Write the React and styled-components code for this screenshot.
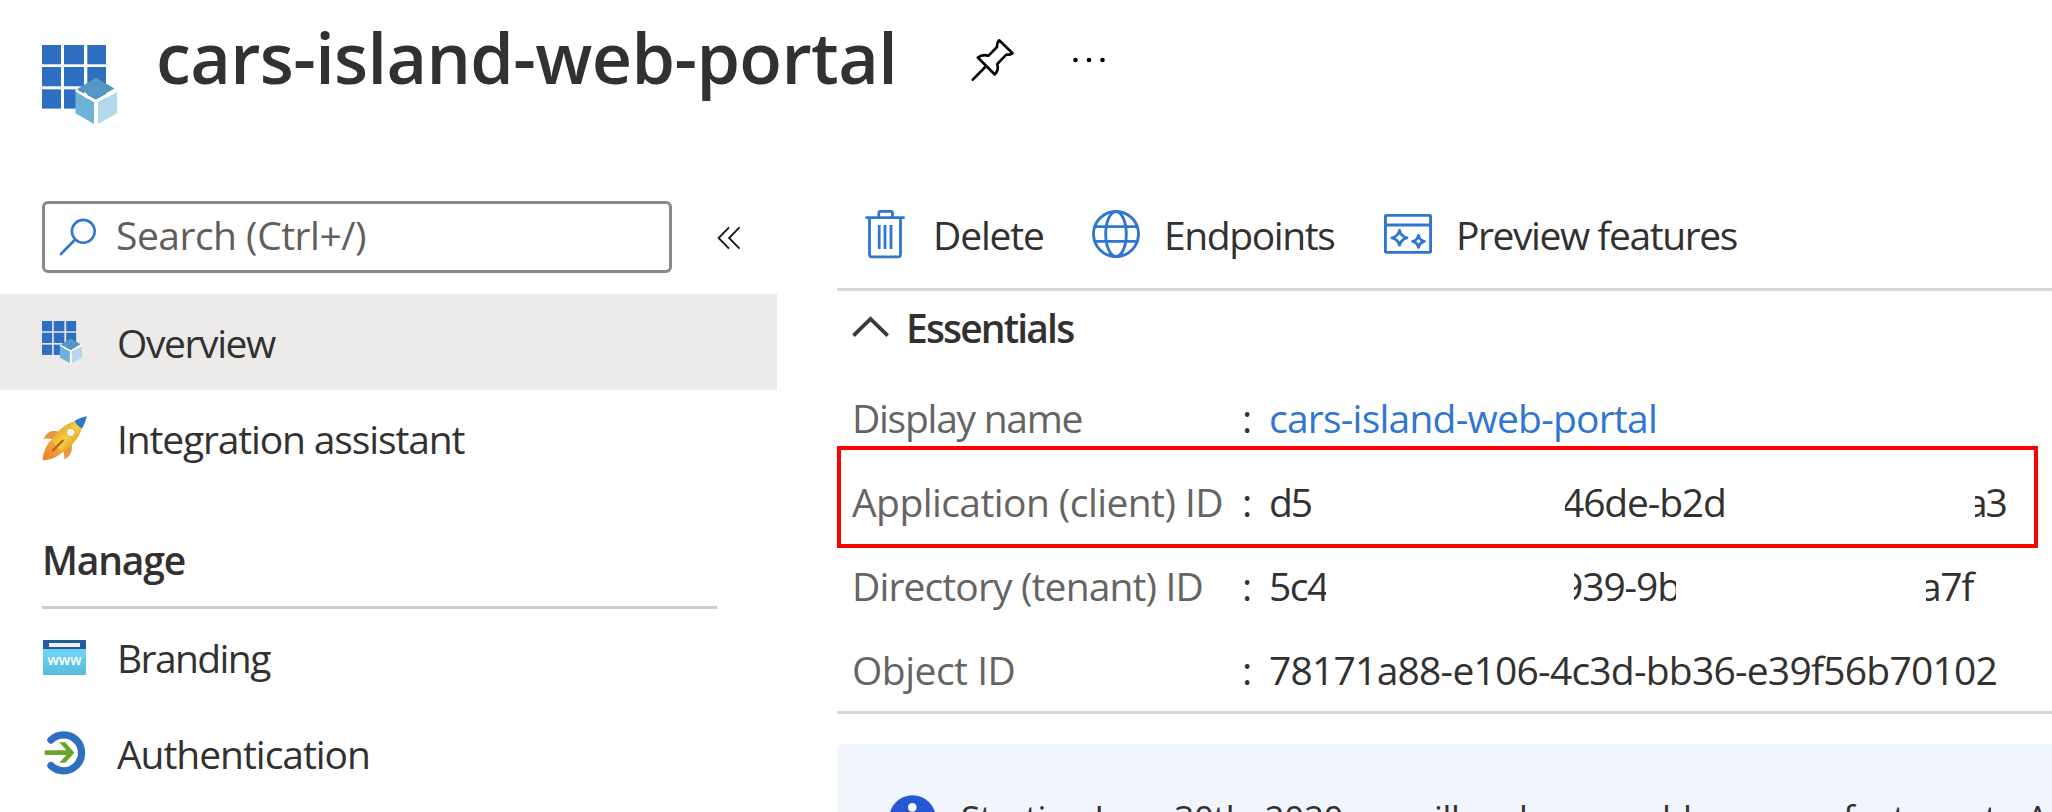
import React from 'react';
import styled, { createGlobalStyle, css } from 'styled-components';

const GlobalStyle = createGlobalStyle`
  *, *::before, *::after { box-sizing: border-box; }
  html, body { margin: 0; padding: 0; background: #fff; overflow: hidden; }
  body {
    font-family: "Open Sans", "Noto Sans", sans-serif;
    font-size: 39px;
    color: #323130;
  }
  svg { flex: none; }
`;

const tracking = css`
  letter-spacing: ${(p) => p.$track || 0}px;
  white-space: nowrap;
`;

const Page = styled.div`
  width: 100%;
  height: 812px;
  overflow: hidden;
  display: flex;
  flex-direction: column;
  background: #fff;
`;

const Header = styled.header`
  height: 180px;
  flex: none;
  display: flex;
  align-items: flex-start;
  padding: 0 42px;
`;

const HeaderIcon = styled.div`
  width: 114px;
  padding-top: 45px;
  line-height: 0;
`;

const Title = styled.h1`
  margin: 0;
  width: 815px;
  font-size: 70px;
  font-weight: 600;
  line-height: 114px;
  ${tracking}
`;

const HeaderActions = styled.div`
  display: flex;
  align-items: center;
  gap: 57px;
  height: 120px;
`;

const Body = styled.div`
  flex: 1;
  display: grid;
  grid-template-columns: 777px 1fr;
  column-gap: 60px;
`;

const Sidebar = styled.nav`
  display: flex;
  flex-direction: column;
`;

const SearchRow = styled.div`
  display: flex;
  align-items: center;
  gap: 45px;
  height: 114px;
  padding: 0 0 0 42px;
`;

const SearchBox = styled.div`
  display: flex;
  align-items: center;
  width: 630px;
  height: 72px;
  border: 3px solid #8a8886;
  border-radius: 6px;
  padding-left: 14px;
`;

const SearchText = styled.span`
  margin-left: 19px;
  padding-bottom: 5px;
  color: #605e5c;
  ${tracking}
`;

const CollapseButton = styled.span`
  display: flex;
  padding-top: 2px;
`;

const NavItem = styled.a`
  display: flex;
  align-items: center;
  height: 96px;
  flex: none;
  padding-left: 42px;
  background: ${(p) => (p.$active ? '#edebe9' : 'transparent')};
`;

const NavIcon = styled.span`
  width: 75px;
  display: flex;
  align-items: center;
  padding-left: ${(p) => p.$inset || 0}px;
`;

const NavLabel = styled.span`
  ${tracking}
`;

const SectionTitle = styled.h2`
  margin: 0 60px 0 42px;
  padding-top: 27px;
  height: 123px;
  flex: none;
  border-bottom: 3px solid #cccccc;
  font-size: 39px;
  font-weight: 600;
  line-height: 94px;
  ${tracking}
`;

const Main = styled.main`
  display: flex;
  flex-direction: column;
  min-width: 0;
`;

const Toolbar = styled.div`
  height: 111px;
  flex: none;
  display: flex;
  align-items: center;
  padding-left: 24px;
  border-bottom: 3px solid #d6d6d6;
`;

const ToolButton = styled.div`
  display: flex;
  align-items: center;
  width: ${(p) => p.$width}px;
  gap: 24px;
`;

const ToolLabel = styled.span`
  ${tracking}
`;

const EssentialsHeader = styled.div`
  height: 85px;
  flex: none;
  display: flex;
  align-items: center;
  padding: 0 0 12px 15px;
  gap: 17px;
`;

const EssentialsTitle = styled.span`
  font-weight: 600;
  ${tracking}
`;

const Essentials = styled.div`
  height: 338px;
  flex: none;
  border-bottom: 3px solid #d6d6d6;
`;

const Field = styled.div`
  position: relative;
  display: grid;
  grid-template-columns: 390px 27px 1fr;
  align-items: center;
  height: 84px;
  padding: 0 0 2px 15px;
`;

const FieldLabel = styled.span`
  color: #666463;
  ${tracking}
`;

const FieldValue = styled.span`
  display: flex;
  color: ${(p) => (p.$link ? '#2f76d2' : '#323130')};
  ${tracking}
`;

const Fragment = styled.span`
  flex: none;
  overflow: hidden;
  width: ${(p) => p.$width}px;
  margin-left: ${(p) => p.$gap || 0}px;
  text-indent: ${(p) => -(p.$cut || 0)}px;
  ${tracking}
`;

const Highlight = styled.div`
  position: absolute;
  left: 0;
  top: -14px;
  width: 1201px;
  height: 102px;
  border: 4px solid #ff0000;
`;

const Notice = styled.div`
  margin-top: 30px;
  height: 180px;
  flex: none;
  display: flex;
  align-items: flex-start;
  padding: 51px 0 0 52px;
  gap: 25px;
  border-radius: 8px 0 0 0;
  background: #f0f5fe;
  overflow: hidden;
`;

const NoticeText = styled.span`
  font-size: 35px;
  line-height: 45px;
  ${tracking}
`;

const AppIcon = ({ size = 75 }) => (
  <svg width={size} height={(size * 79) / 75} viewBox="42 45 75 79">
    <g fill="#2f6fc1">
      {[45, 67, 89.3].map((y) =>
        [[42, 19], [64, 20], [87.3, 18.7]].map(([x, w]) => (
          <rect key={`${x}-${y}`} x={x} y={y} width={w} height={19.3} />
        ))
      )}
    </g>
    <path d="M77 89.5 96 99.5 115 88.5 117 92 98 102.5V124H94V102.5L75.5 92V89Z" fill="#fff" />
    <path d="M106 83.7V109H117V92Z" fill="#fff" />
    <path d="M96 77.8 114.5 88.4 96 99 77.8 88.4Z" fill="#5596c4" />
    <path d="M75.5 92 94 102.6V124L75.5 113.3Z" fill="#6fb1d8" />
    <path d="M98 102.6 117 92V113.3L98 124Z" fill="#b5d7eb" />
  </svg>
);

const PinIcon = () => (
  <svg width="44" height="44" viewBox="971 38.5 44 44" fill="none" stroke="#000" strokeWidth="2.6" strokeLinejoin="round" strokeLinecap="round">
    <path d="M999.2 40.8 1012.6 53.8C1011 55.3 1008.5 55.3 1006 55.3L997.2 64.6C998.6 68.5 997.5 72 994.8 75L977.8 58C981 55.6 984.5 55 988.3 56.3L997 47.5C997 45 997.3 42.6 999.2 40.8Z" />
    <path d="M986.2 66.5 972.8 80.2" />
  </svg>
);

const MoreIcon = () => (
  <svg width="34" height="8" viewBox="1072 56 34 8">
    <circle cx="1075.5" cy="60" r="2.3" />
    <circle cx="1089" cy="60" r="2.3" />
    <circle cx="1102.5" cy="60" r="2.3" />
  </svg>
);

const SearchIcon = () => (
  <svg width="38" height="38" viewBox="59 218 38 38" fill="none" stroke="#2f76d2" strokeWidth="2.6">
    <circle cx="83.3" cy="231.3" r="11.4" />
    <path d="M75.2 239.5 61 254" strokeLinecap="round" />
  </svg>
);

const CollapseIcon = () => (
  <svg width="24" height="24" viewBox="717 226 24 24" fill="none" stroke="#1b1a19" strokeWidth="1.9">
    <path d="M729 227.3 718.6 238 729 248.7M739.5 227.3 729.1 238 739.5 248.7" />
  </svg>
);

const RocketIcon = () => (
  <svg width="46" height="47" viewBox="36 315 138 141">
    <defs>
      <linearGradient id="hull" x1="0" y1="0" x2="1" y2="1">
        <stop offset="0.3" stopColor="#e9b32e" />
        <stop offset="0.5" stopColor="#f6cf45" />
        <stop offset="0.75" stopColor="#dfa92a" />
      </linearGradient>
      <linearGradient id="flame" x1="1" y1="0" x2="0" y2="1">
        <stop offset="0.3" stopColor="#f3a73f" />
        <stop offset="1" stopColor="#e27a2c" />
      </linearGradient>
    </defs>
    <path d="M41 387C49 366 66 359 86 365L68 388C58 385 49 384 41 387Z" fill="#ec9440" />
    <path d="M124 401C130 423 120 440 103 448C104 437 102 428 97 421Z" fill="#ec9440" />
    <path d="M66 388C50 402 40 425 38 451C62 450 84 441 100 424Z" fill="url(#flame)" />
    <path d="M134 333C104 343 83 363 66 389C72 405 85 419 101 425C127 407 147 383 156 354Z" fill="url(#hull)" />
    <path d="M170 319C157 321 145 326 134 333C138 342 146 350 156 355C163 344 168 332 170 319Z" fill="#2f76d2" />
    <circle cx="122" cy="367" r="12.5" fill="#f2f2f2" stroke="#d9a52c" strokeWidth="2.5" />
    <path d="M98 392 69 421" stroke="#c4591c" strokeWidth="7" strokeLinecap="round" />
  </svg>
);

const BrandingIcon = () => (
  <svg width="44" height="35" viewBox="0 0 44 35">
    <defs>
      <linearGradient id="page" x1="0" y1="0" x2="0" y2="1">
        <stop offset="0.4" stopColor="#6bd3f2" />
        <stop offset="1" stopColor="#5ab8dc" />
      </linearGradient>
    </defs>
    <rect x="1" y="0" width="43" height="35" rx="1.2" fill="url(#page)" />
    <path d="M1 9V1.2Q1 0 2.2 0H42.8Q44 0 44 1.2V9Z" fill="#255c9f" />
    <rect x="7" y="3" width="31" height="4" fill="#f2f2f2" />
    <text x="22.5" y="25.3" textAnchor="middle" textLength="34" lengthAdjust="spacingAndGlyphs" fontSize="15" fontWeight="600" fill="#fff">www</text>
  </svg>
);

const AuthIcon = () => (
  <svg width="43" height="44" viewBox="40 335 129 132" fill="none">
    <path d="M61 362A54 54 0 1 1 61 439" stroke="#2f6fc1" strokeWidth="22" strokeLinecap="round" />
    <path d="M44 393H107L86 369H104L131 400 104 430H86L107 407H44Q42 407 42 404V396Q42 393 44 393Z" fill="#6aa32d" />
  </svg>
);

const TrashIcon = () => (
  <svg width="48" height="50" viewBox="861 209 48 50" fill="none" stroke="#2f76d2" strokeWidth="2.8">
    <path d="M865.5 217.6H904.7" />
    <path d="M878.8 217V213Q878.8 211.3 880.5 211.3H890.8Q892.5 211.3 892.5 213V217" />
    <path d="M869.5 218V254.5Q869.5 256.8 871.8 256.8H898.2Q900.5 256.8 900.5 254.5V218" />
    <path d="M879.2 225V249M885 225V249M891 225V249" />
  </svg>
);

const GlobeIcon = () => (
  <svg width="48" height="48" viewBox="1092 210 48 48" fill="none" stroke="#2f76d2" strokeWidth="2.9">
    <circle cx="1116" cy="234" r="22.5" />
    <ellipse cx="1116" cy="234" rx="10.3" ry="22.5" />
    <path d="M1095 226.6H1137M1095 241.4H1137" />
  </svg>
);

const PreviewIcon = () => (
  <svg width="48" height="42" viewBox="1384 213 48 42" fill="none" stroke="#2f76d2" strokeWidth="2.9" strokeLinejoin="round">
    <rect x="1385.4" y="215.4" width="45.2" height="37" rx="1" />
    <path d="M1385 225H1431" />
    <path d="M1399.5 230.5Q1401 236.5 1407 237.8Q1401 239.2 1399.5 245.2Q1398 239.2 1392 237.8Q1398 236.5 1399.5 230.5Z" />
    <path d="M1418.5 235.5Q1419.6 240.2 1424.3 241.4Q1419.6 242.6 1418.5 247.3Q1417.4 242.6 1412.7 241.4Q1417.4 240.2 1418.5 235.5Z" />
  </svg>
);

const ChevronUpIcon = () => (
  <svg width="37" height="24" viewBox="852 315 37 24" fill="none" stroke="#3b3a39" strokeWidth="3.8">
    <path d="M853.5 334.7 870.5 318 887.7 334.7" />
  </svg>
);

const InfoIcon = () => (
  <svg width="47" height="47" viewBox="0 0 47 47">
    <circle cx="23.5" cy="23.5" r="23.3" fill="#2459d3" />
    <circle cx="23.3" cy="12.4" r="4.3" fill="#fff" />
    <rect x="19.6" y="19.5" width="7.4" height="18" rx="1" fill="#fff" />
  </svg>
);

export default function App() {
  return (
    <Page>
      <GlobalStyle />
      <Header>
        <HeaderIcon><AppIcon /></HeaderIcon>
        <Title $track={-0.6}>cars-island-web-portal</Title>
        <HeaderActions>
          <PinIcon />
          <MoreIcon />
        </HeaderActions>
      </Header>
      <Body>
        <Sidebar>
          <SearchRow>
            <SearchBox>
              <SearchIcon />
              <SearchText $track={-0.5}>Search (Ctrl+/)</SearchText>
            </SearchBox>
            <CollapseButton><CollapseIcon /></CollapseButton>
          </SearchRow>
          <NavItem $active>
            <NavIcon><AppIcon size={40} /></NavIcon>
            <NavLabel $track={-1.4}>Overview</NavLabel>
          </NavItem>
          <NavItem>
            <NavIcon><RocketIcon /></NavIcon>
            <NavLabel $track={-1.15}>Integration assistant</NavLabel>
          </NavItem>
          <SectionTitle $track={-1.16}>Manage</SectionTitle>
          <NavItem>
            <NavIcon><BrandingIcon /></NavIcon>
            <NavLabel $track={-1.6}>Branding</NavLabel>
          </NavItem>
          <NavItem>
            <NavIcon $inset={1.5}><AuthIcon /></NavIcon>
            <NavLabel $track={-1.04}>Authentication</NavLabel>
          </NavItem>
        </Sidebar>
        <Main>
          <Toolbar>
            <ToolButton $width={231}>
              <TrashIcon />
              <ToolLabel $track={-1.15}>Delete</ToolLabel>
            </ToolButton>
            <ToolButton $width={292}>
              <GlobeIcon />
              <ToolLabel $track={-1.39}>Endpoints</ToolLabel>
            </ToolButton>
            <ToolButton $width={360}>
              <PreviewIcon />
              <ToolLabel $track={-1.44}>Preview features</ToolLabel>
            </ToolButton>
          </Toolbar>
          <EssentialsHeader>
            <ChevronUpIcon />
            <EssentialsTitle $track={-1.85}>Essentials</EssentialsTitle>
          </EssentialsHeader>
          <Essentials>
            <Field>
              <FieldLabel $track={-1.26}>Display name</FieldLabel>
              <span>:</span>
              <FieldValue $link $track={-0.77}>cars-island-web-portal</FieldValue>
            </Field>
            <Field>
              <Highlight />
              <FieldLabel $track={-0.57}>Application (client) ID</FieldLabel>
              <span>:</span>
              <FieldValue>
                <Fragment $width={46} $track={-2}>d5</Fragment>
                <Fragment $gap={250} $width={162} $cut={3} $track={-1.15}>46de-b2d</Fragment>
                <Fragment $gap={248} $width={35} $cut={9} $track={-2.2}>a3</Fragment>
              </FieldValue>
            </Field>
            <Field>
              <FieldLabel $track={-0.87}>Directory (tenant) ID</FieldLabel>
              <span>:</span>
              <FieldValue>
                <Fragment $width={57} $track={-1.5}>5c4</Fragment>
                <Fragment $gap={248} $width={102} $cut={13} $track={-1.1}>939-9b</Fragment>
                <Fragment $gap={250} $width={54} $cut={6} $track={-1.4}>a7f</Fragment>
              </FieldValue>
            </Field>
            <Field>
              <FieldLabel $track={-0.5}>Object ID</FieldLabel>
              <span>:</span>
              <FieldValue $track={-0.77}>78171a88-e106-4c3d-bb36-e39f56b70102</FieldValue>
            </Field>
          </Essentials>
          <Notice>
            <InfoIcon />
            <NoticeText $track={-0.3}>
              Starting June 30th, 2020 we will no longer add any new features to Azure
            </NoticeText>
          </Notice>
        </Main>
      </Body>
    </Page>
  );
}
